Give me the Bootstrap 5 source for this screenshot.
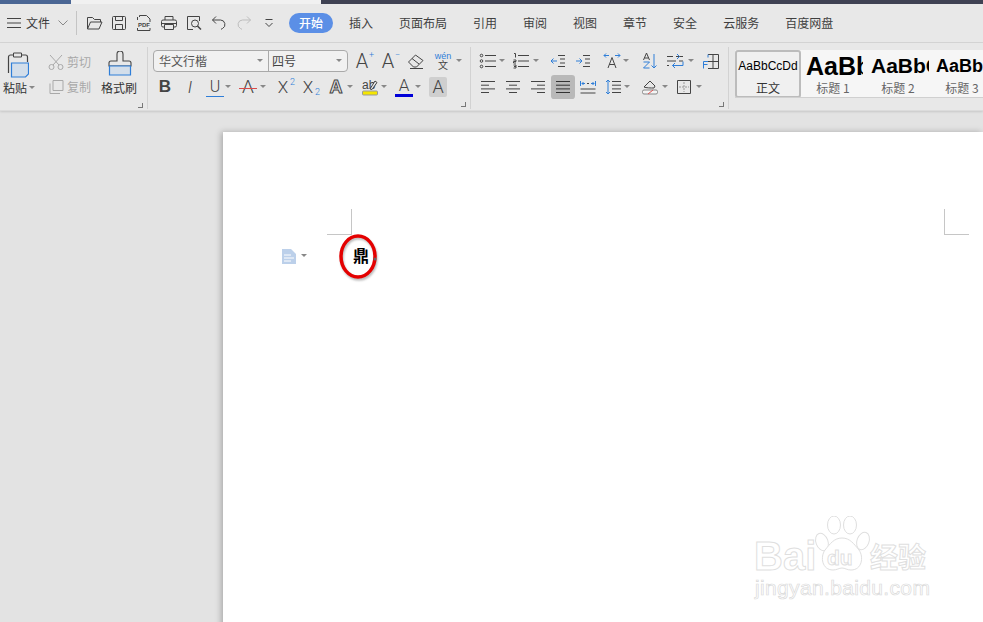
<!DOCTYPE html>
<html lang="zh-CN">
<head>
    <meta charset="UTF-8">
    <meta name="viewport" content="width=device-width, initial-scale=1.0">
    <title>文字文稿</title>
    <link href="https://cdn.jsdelivr.net/npm/bootstrap@5.3.0/dist/css/bootstrap.min.css" rel="stylesheet">
    <style>
        html, body { height: 622px; overflow: hidden; }
        body { font: 12px/1.2 "Noto Sans CJK SC", "Liberation Sans", sans-serif; color: #3a3a3a; background: #e3e3e3; }
        .app-shell { width: 983px; height: 622px; }

        .top-strip { height: 4px; background: #3f4253; flex: none; }
        .top-strip .s-blue { width: 71px; background: #4a6694; }
        .top-strip .s-light { width: 250px; background: #f1f1f1; }

        .tab-row { height: 39px; background: #e8e8e8; border-bottom: 1px solid #d5d5d5; padding-left: 7px; flex: none; }
        .tab-sep { width: 1px; height: 24px; background: #c4c4c4; margin: 0 6px 0 8px; }
        .tab-pill { width: 44px; height: 20px; border-radius: 10px; background: #5b8fe6; color: #fff; font-weight: 500; line-height: 20px; text-align: center; margin-left: 4px; margin-right: 16px; }
        .tab-name { margin-right: 26px; color: #404040; }
        .quick-ic { width: 18px; height: 18px; margin-right: 7px; flex: none; }

        .ribbon { height: 68px; background: #e8e8e8; border-bottom: 1px solid #dcdcdc; box-shadow: 0 1px 2px rgba(0,0,0,.12); flex: none; }
        .rb-group { height: 62px; margin-top: 4px; padding-top: 3px; border-right: 1px solid #d2d2d2; flex: none; }
        .rb-one { width: 148px; }
        .rb-two { width: 323px; padding-left: 5px; }
        .rb-three { width: 258px; }
        .rb-cols { height: 50px; }
        .rb-line { height: 22px; }
        .rb-line + .rb-line { height: 24px; margin-top: 3px; }
        .launch { width: 5px; height: 5px; border-right: 1px solid #777; border-bottom: 1px solid #777; margin: 3px 4px 0 auto; }

        .ic { width: 18px; height: 18px; flex: none; }
        .ic-text { width: 18px; height: 20px; line-height: 20px; flex: none; text-align: center; font-family: "Liberation Sans", sans-serif; font-size: 17px; color: #444; position: relative; }
        .ic-thin { font-family: Roboto, "Liberation Sans", sans-serif; font-weight: 300; }
        .ic-big { font-size: 20px; line-height: 22px; height: 22px; }
        .ic-text sup, .ic-text sub { font-size: 9px; color: #2f7ed8; position: absolute; line-height: 1; }
        .ic-text sup { top: 1px; right: -3px; }
        .ic-text sub { bottom: 0; right: -3px; }
        .under-blue { border-bottom: 1px solid #2f7ed8; height: 19px; line-height: 17px; font-size: 16px; }
        .strike-red { font-size: 19px; }
        .strike-red::after { content: ""; position: absolute; left: 0; right: 0; top: 11px; height: 1px; background: #d94a4a; }
        .under-navy { border-bottom: 3px solid #0000d8; height: 20px; line-height: 16px; font-size: 17px; }
        .outline-a { color: #e8e8e8; -webkit-text-stroke: 1px #444; font-weight: 700; font-size: 18px; }
        .shaded { background: #cfcfcf; border-radius: 2px; font-size: 18px; }
        .active-ic { background: #b9b9b9; box-shadow: 0 0 0 3px #b9b9b9; border-radius: 1px; }
        .caret-sm { width: 8px; height: 4px; flex: none; position: relative; }
        .caret-sm::after { content: ""; position: absolute; left: 1px; top: 0; border: 3px solid transparent; border-top: 3px solid #888; border-bottom: 0; }

        .ml-0 { margin-left: 0; } .ml-1 { margin-left: 1px; } .ml-2 { margin-left: 2px; } .ml-3 { margin-left: 3px; }
        .ml-5 { margin-left: 5px; } .ml-6 { margin-left: 6px; } .ml-7 { margin-left: 7px; } .ml-8 { margin-left: 8px; }
        .ml-9 { margin-left: 9px; } .ml-10 { margin-left: 10px; } .ml-11 { margin-left: 11px; }

        .font-box { width: 195px; height: 22px; background: #f1f1f1; border: 1px solid #a9a9a9; border-radius: 4px; }
        .font-name { width: 115px; padding-left: 5px; border-right: 1px solid #a9a9a9; height: 100%; line-height: 20px; color: #555; }
        .font-size-box { padding-left: 3px; line-height: 20px; flex: 1; color: #444; }

        .paste-col { width: 40px; padding-top: 1px; padding-left: 3px; }
        .cut-col { width: 61px; padding-left: 7px; padding-top: 3px; color: #a9a9a9; }
        .cut-line { height: 18px; margin-bottom: 7px; }
        .brush-col { width: 38px; padding-top: 1px; }
        .big-ic { width: 26px; height: 27px; display: block; }
        .big-label { margin-top: 3px; white-space: nowrap; color: #333; }

        .gallery { width: 248px; height: 48px; margin: 7px 0 0 6px; background: #f6f6f6; border-bottom: 1px solid #d0d0d0; overflow: hidden; flex: none; }
        .style-cell { height: 48px; flex: none; overflow: hidden; text-align: center; color: #666; margin-right: 4px; }
        .style-cell.picked { width: 66px; border: 2px solid #bcbcbc; border-radius: 3px; background: #f0f0f0; color: #333; margin-right: 2px; }
        .style-cell.h-one { width: 60px; }
        .style-cell.h-two { width: 62px; }
        .style-cell.h-three { width: 58px; }
        .sample { display: block; height: 30px; white-space: nowrap; font-family: "Liberation Sans", sans-serif; color: #000; overflow: hidden; text-align: left; font-weight: 700; line-height: 32px; }
        .picked .sample { font-size: 12px; line-height: 28px; height: 28px; font-weight: 400; text-align: center; }
        .h-one .sample { font-size: 25px; padding-left: 3px; }
        .h-two .sample { font-size: 21px; padding-left: 4px; }
        .h-three .sample { font-size: 18px; padding-left: 3px; }
        .style-label { display: block; line-height: 16px; }

        .workspace { padding: 21px 0 0 223px; flex: 1; overflow: hidden; }
        .doc-page { background: #fff; height: 500px; width: 760px; position: relative; box-shadow: -2px 0 6px rgba(0,0,0,.25); }
        .crop { position: absolute; width: 25px; height: 26px; border-bottom: 1px solid #c6c6c6; }
        .crop-left { left: 104px; top: 77px; border-right: 1px solid #c6c6c6; }
        .crop-right { left: 721px; top: 77px; border-left: 1px solid #c6c6c6; }
        .para-mark { position: absolute; left: 59px; top: 117px; }
        .para-caret { position: absolute; left: 77px; top: 122px; }
        .doc-char { position: absolute; left: 130px; top: 111px; font-size: 16px; line-height: 24px; font-weight: 700; color: #000; }
        .red-ring { position: absolute; left: 112px; top: 99px; }
        .wm-wrap { position: absolute; left: 530px; top: 384px; width: 190px; height: 90px; font-family: "Liberation Sans", sans-serif; color: #fff; -webkit-text-stroke: 1px #dfdfdf; }
        .wm-bai { position: absolute; left: 1px; top: 18px; font-size: 40px; line-height: 44px; font-weight: 700; }
        .wm-du { position: absolute; left: 74px; top: 30px; font-size: 21px; line-height: 24px; font-weight: 700; }
        .wm-cn { position: absolute; left: 117px; top: 23px; font: 700 28px/34px "Noto Sans CJK SC", sans-serif; }
        .wm-url { position: absolute; left: 2px; top: 59px; font-size: 21px; line-height: 26px; letter-spacing: .35px; -webkit-text-stroke: .7px #dadada; }
        .wm-paw { position: absolute; left: 60px; top: 0; }
    </style>
</head>
<body>
    <svg width="0" height="0" class="d-none">
        <defs>
            <filter id="soft"><feGaussianBlur stdDeviation="1.2"/></filter>
            <g id="i-folder" fill="none" stroke="#444"><path d="M2.5 15V3.5h5l2 2h6V8"/><path d="M2.5 15l3-7h11.5l-3 7z"/></g>
            <g id="i-save" fill="none" stroke="#444"><path d="M2.500 3.500a1 1 0 0 1 1-1h11a1 1 0 0 1 1 1v11a1 1 0 0 1-1 1h-11a1 1 0 0 1-1-1z"/><path d="M5.500 2.500v4h7v-4M5.500 15.500v-5h7v5"/></g>
            <g id="i-print" fill="none" stroke="#444"><path d="M5 6V2.500h8V6"/><path d="M4.500 13H3a1.500 1.500 0 0 1-1.500-1.500v-4A1.500 1.500 0 0 1 3 6h12a1.500 1.500 0 0 1 1.500 1.500v4A1.500 1.500 0 0 1 15 13h-1.500"/><path d="M4.500 10.500h9v5h-9zM1.500 9.500h15"/></g>
            <g id="i-preview" fill="none" stroke="#444"><path d="M8 15.500H2.500v-13h12V7"/><circle cx="10" cy="9.500" r="3.500"/><path d="M12.500 12l3.500 3.500" stroke-width="1.500"/></g>
            <g id="i-undo" fill="none" stroke="#444"><path d="M6 2.500L2.500 6 6 9.500"/><path d="M2.500 6h8a4.500 4.500 0 0 1 2 8.500l-1.500.8"/></g>
            <g id="i-redo" fill="none" stroke="#bdbdbd"><path d="M12 2.500L15.500 6 12 9.500"/><path d="M15.500 6h-8a4.500 4.500 0 0 0-2 8.500l1.500.8"/></g>
            <g id="i-more" fill="none" stroke="#444"><path d="M5.500 5.500h7M5.500 9l3.500 3.500L12.500 9"/></g>
            <g id="i-eraser" fill="none" stroke="#444"><path d="M1.500 10l7-7 7.500 5.500-6.500 6.500H6.500z"/><path d="M5 6.500l7 5.500M3 16.500h13"/></g>
            <g id="i-bullet" fill="none" stroke="#444"><circle cx="2.500" cy="3.500" r="1.300"/><circle cx="2.500" cy="9" r="1.300"/><circle cx="2.500" cy="14.500" r="1.300"/><path d="M6 3.500h11M6 9h11M6 14.500h11"/></g>
            <g id="i-number" fill="none" stroke="#444"><path d="M2 1.500h1.500v4M1.500 8h2.500v1.500H1.500V11H4M1.500 13H4v1.500H2M4 14.500V16H1.500"/><path d="M6 3.500h11M6 9h11M6 14.500h11"/></g>
            <g id="i-outdent" fill="none"><path d="M9 3.500h7M11 7h5M11 11h5M9 14.500h7" stroke="#444"/><path d="M8 9H2M4.500 6.500L2 9l2.500 2.500" stroke="#2f7ed8"/></g>
            <g id="i-indent" fill="none"><path d="M9 3.500h7M11 7h5M11 11h5M9 14.500h7" stroke="#444"/><path d="M2 9h6M5.500 6.500L8 9l-2.500 2.500" stroke="#2f7ed8"/></g>
            <g id="i-width" fill="none"><path d="M5 16L9 5.500 13 16M6.300 12.500h5.400" stroke="#444"/><path d="M1 3.500h5M3 1.500l-2 2 2 2M17 3.500h-5M15 1.500l2 2-2 2" stroke="#2f7ed8"/></g>
            <g id="i-sort" fill="none"><path d="M2.500 8L5.500 1l3 7M3.500 6h4" stroke="#444"/><path d="M2.500 10h6L2.500 16h6M13 2v14M10.500 13.500L13 16l2.500-2.500" stroke="#2f7ed8"/></g>
            <g id="i-swap" fill="none"><path d="M1 4.500h6M1 9h9M10 4.500h7M13 9h4M1 13.500h2" stroke="#444"/><path d="M11 2l2.500 2.500L11 7" stroke="#2f7ed8"/><path d="M17 9.500v4H6.500M9 11l-2.500 2.500L9 16" stroke="#2f7ed8"/></g>
            <g id="i-table" fill="none"><path d="M6 2.500h10.500v14H6M11 2.500v14M6 9.500h10.500" stroke="#444"/><path d="M6 2.500v3M1.500 9.500h4.500M1.500 9.500v7M1.500 12.500h4" stroke="#2f7ed8"/></g>
            <g id="i-left" fill="none" stroke="#444"><path d="M2 3.500h14M2 7.200h8M2 10.900h14M2 14.500h8"/></g>
            <g id="i-center" fill="none" stroke="#444"><path d="M2 3.500h14M5 7.200h8M2 10.900h14M5 14.500h8"/></g>
            <g id="i-right" fill="none" stroke="#444"><path d="M2 3.500h14M8 7.200h8M2 10.900h14M8 14.500h8"/></g>
            <g id="i-just" fill="none" stroke="#333"><path d="M2 3.500h14M2 7.200h14M2 10.900h14M2 14.500h14"/></g>
            <g id="i-dist" fill="none"><path d="M1.500 11h15M1.500 15h15" stroke="#444"/><path d="M1.500 3v5M16.500 3v5M3 5.500h3M4.500 4l-1.500 1.500L4.500 7M15 5.500h-3M13.500 4l1.500 1.500L13.500 7" stroke="#2f7ed8"/><path d="M8 5.500h2" stroke="#444"/></g>
            <g id="i-spacing" fill="none"><path d="M8 3.500h9M8 7.200h9M8 10.900h9M8 14.500h9" stroke="#444"/><path d="M4 2v14M2 4l2-2 2 2M2 14l2 2 2-2" stroke="#2f7ed8"/></g>
            <g id="i-fill" fill="none" stroke="#444"><path d="M3 9l6-6 5 5-1 2"/><path d="M3 9c2 1 7 1 10 1"/><rect x="1.500" y="12" width="15" height="4" rx="1.500" fill="#f4f4f4" stroke="#888"/><path d="M7 16l5-4" stroke="#e05050"/></g>
            <g id="i-border" fill="none"><path d="M2.500 2.500h13v13h-13z" stroke="#444"/><path d="M9 4v10M4 9h10" stroke="#999" stroke-dasharray="2 1"/></g>
        </defs>
    </svg>

    <div class="app-shell d-flex flex-column">
        <div class="top-strip d-flex">
            <div class="s-blue"></div>
            <div class="s-light"></div>
        </div>

        <div class="tab-row d-flex align-items-center">
            <svg width="14" height="12" viewBox="0 0 14 12" class="flex-none"><path d="M0 1.500h14M0 6h14M0 10.500h14" stroke="#444" fill="none"/></svg>
            <span class="ml-5 text-nowrap">文件</span>
            <svg width="10" height="6" viewBox="0 0 10 6" class="ml-8"><path d="M.5.500L5 5l4.500-4.500" stroke="#888" fill="none"/></svg>
            <span class="tab-sep"></span>
            <svg class="quick-ic ml-2" viewBox="0 0 18 18"><use href="#i-folder"/></svg>
            <svg class="quick-ic" viewBox="0 0 18 18"><use href="#i-save"/></svg>
            <svg class="quick-ic" viewBox="0 0 18 18"><path d="M4.500 3V1.500h7l3.500 3.500v3M2.500 14v2.500h12.500V14M2.500 3v3" fill="none" stroke="#444"/><text x="9" y="12.500" font-size="6" font-weight="700" text-anchor="middle" fill="#444" font-family="Liberation Sans">PDF</text></svg>
            <svg class="quick-ic" viewBox="0 0 18 18"><use href="#i-print"/></svg>
            <svg class="quick-ic" viewBox="0 0 18 18"><use href="#i-preview"/></svg>
            <svg class="quick-ic" viewBox="0 0 18 18"><use href="#i-undo"/></svg>
            <svg class="quick-ic" viewBox="0 0 18 18"><use href="#i-redo"/></svg>
            <svg class="quick-ic" viewBox="0 0 18 18"><use href="#i-more"/></svg>
            <span class="tab-pill">开始</span>
            <span class="tab-name">插入</span>
            <span class="tab-name">页面布局</span>
            <span class="tab-name">引用</span>
            <span class="tab-name">审阅</span>
            <span class="tab-name">视图</span>
            <span class="tab-name">章节</span>
            <span class="tab-name">安全</span>
            <span class="tab-name">云服务</span>
            <span class="tab-name">百度网盘</span>
        </div>

        <div class="ribbon d-flex">
            <div class="rb-group rb-one">
                <div class="rb-cols d-flex">
                    <div class="paste-col">
                        <svg class="big-ic" viewBox="0 0 26 27"><path d="M5.500 22V6a2 2 0 0 1 2-2h15a2 2 0 0 1 2 2v5" fill="none" stroke="#444" stroke-width="1.200"/><path d="M10.500 2h8v4h-8z" fill="#e8e8e8" stroke="#444"/><path d="M8.500 12h17v11l-3 3h-14z" fill="#d3deea" stroke="#2f7ed8" stroke-width="1.200"/></svg>
                        <div class="big-label d-flex align-items-center">粘贴<span class="caret-sm ml-1"></span></div>
                    </div>
                    <div class="cut-col">
                        <div class="cut-line d-flex align-items-center">
                            <svg class="ic" viewBox="0 0 18 18" fill="none" stroke="#a9a9a9"><circle cx="4.500" cy="14" r="2.500"/><circle cx="13.500" cy="14" r="2.500"/><path d="M6 12L15 2M12 12L3 2"/></svg>
                            <span class="ml-2">剪切</span>
                        </div>
                        <div class="cut-line d-flex align-items-center">
                            <svg class="ic" viewBox="0 0 18 18" fill="none" stroke="#a9a9a9"><path d="M6 2.500h10v10H6z"/><path d="M3 5.500v10h10"/></svg>
                            <span class="ml-2">复制</span>
                        </div>
                    </div>
                    <div class="brush-col">
                        <svg class="big-ic mx-auto" viewBox="0 0 26 27"><path d="M10 10V3a3 3 0 0 1 6 0v7h6a2 2 0 0 1 2 2v3H2v-3a2 2 0 0 1 2-2z" fill="none" stroke="#444" stroke-width="1.100"/><path d="M2.500 15h21v9h-21z" fill="#d3deea" stroke="#2f7ed8" stroke-width="1.200"/></svg>
                        <div class="big-label">格式刷</div>
                    </div>
                </div>
                <div class="launch"></div>
            </div>

            <div class="rb-group rb-two">
                <div class="rb-line d-flex align-items-center">
                    <div class="font-box d-flex">
                        <div class="font-name d-flex align-items-center justify-content-between">华文行楷<span class="caret-sm me-1"></span></div>
                        <div class="font-size-box d-flex align-items-center justify-content-between">四号<span class="caret-sm me-1"></span></div>
                    </div>
                    <span class="ic-text ic-thin ic-big ml-5">A<sup>+</sup></span>
                    <span class="ic-text ic-thin ic-big ml-8">A<sup>−</sup></span>
                    <svg class="ic ml-10" viewBox="0 0 18 18"><use href="#i-eraser"/></svg>
                    <svg class="ic ml-9" viewBox="0 0 18 18"><text x="9" y="6.500" font-size="9" text-anchor="middle" fill="#2f7ed8" font-family="Liberation Sans">wén</text><text x="9" y="17" font-size="10" text-anchor="middle" fill="#444" font-family="Noto Sans CJK SC">文</text></svg>
                    <span class="caret-sm ml-3"></span>
                </div>
                <div class="rb-line d-flex align-items-center">
                    <span class="ic-text ml-3"><b>B</b></span>
                    <span class="ic-text ic-thin ml-7"><i>I</i></span>
                    <span class="ic-text ic-thin ml-7 under-blue">U</span>
                    <span class="caret-sm"></span>
                    <span class="ic-text ic-thin ml-7 strike-red">A</span>
                    <span class="caret-sm ml-2"></span>
                    <span class="ic-text ic-thin ml-7">X<sup>2</sup></span>
                    <span class="ic-text ic-thin ml-7">X<sub>2</sub></span>
                    <span class="ic-text outline-a ml-10">A</span>
                    <span class="caret-sm ml-1"></span>
                    <svg class="ic ml-7" viewBox="0 0 18 18"><text x="1" y="11" font-size="12" fill="#444" font-family="Liberation Sans">ab</text><path d="M9 11l5-8 2 1.500-5 7z" fill="#e8e8e8" stroke="#444"/><rect x="1.500" y="13" width="15" height="4" rx="1" fill="#f5e600" stroke="#999"/></svg>
                    <span class="caret-sm ml-1"></span>
                    <span class="ic-text ic-thin ml-7 under-navy">A</span>
                    <span class="caret-sm ml-1"></span>
                    <span class="ic-text ic-thin ml-7 shaded">A</span>
                </div>
                <div class="launch"></div>
            </div>

            <div class="rb-group rb-three">
                <div class="rb-line d-flex align-items-center ps-2">
                    <svg class="ic" viewBox="0 0 18 18"><use href="#i-bullet"/></svg>
                    <span class="caret-sm ml-1"></span>
                    <svg class="ic ml-6" viewBox="0 0 18 18"><use href="#i-number"/></svg>
                    <span class="caret-sm ml-2"></span>
                    <svg class="ic ml-9" viewBox="0 0 18 18"><use href="#i-outdent"/></svg>
                    <svg class="ic ml-7" viewBox="0 0 18 18"><use href="#i-indent"/></svg>
                    <svg class="ic ml-11" viewBox="0 0 18 18"><use href="#i-width"/></svg>
                    <span class="caret-sm ml-1"></span>
                    <svg class="ic ml-11" viewBox="0 0 18 18"><use href="#i-sort"/></svg>
                    <svg class="ic ml-7" viewBox="0 0 18 18"><use href="#i-swap"/></svg>
                    <span class="caret-sm ml-3"></span>
                    <svg class="ic ml-7" viewBox="0 0 18 18"><use href="#i-table"/></svg>
                </div>
                <div class="rb-line d-flex align-items-center ps-2">
                    <svg class="ic" viewBox="0 0 18 18"><use href="#i-left"/></svg>
                    <svg class="ic ml-7" viewBox="0 0 18 18"><use href="#i-center"/></svg>
                    <svg class="ic ml-7" viewBox="0 0 18 18"><use href="#i-right"/></svg>
                    <svg class="ic ml-7 active-ic" viewBox="0 0 18 18"><use href="#i-just"/></svg>
                    <svg class="ic ml-7" viewBox="0 0 18 18"><use href="#i-dist"/></svg>
                    <svg class="ic ml-7" viewBox="0 0 18 18"><use href="#i-spacing"/></svg>
                    <span class="caret-sm ml-1"></span>
                    <svg class="ic ml-10" viewBox="0 0 18 18"><use href="#i-fill"/></svg>
                    <span class="caret-sm ml-2"></span>
                    <svg class="ic ml-6" viewBox="0 0 18 18"><use href="#i-border"/></svg>
                    <span class="caret-sm ml-2"></span>
                </div>
                <div class="launch"></div>
            </div>

            <div class="gallery d-flex">
                <div class="style-cell picked"><span class="sample">AaBbCcDd</span><span class="style-label">正文</span></div>
                <div class="style-cell h-one"><span class="sample">AaBb</span><span class="style-label">标题 1</span></div>
                <div class="style-cell h-two"><span class="sample">AaBbC</span><span class="style-label">标题 2</span></div>
                <div class="style-cell h-three"><span class="sample">AaBb</span><span class="style-label">标题 3</span></div>
            </div>
        </div>

        <div class="workspace">
            <div class="doc-page">
                <div class="crop crop-left"></div>
                <div class="crop crop-right"></div>
                <svg class="para-mark" width="14" height="15" viewBox="0 0 14 15"><path d="M0 0h9l5 5v10H0z" fill="#bcd0ea"/><path d="M2 6h7M2 9h10M2 12h7" stroke="#fff"/></svg>
                <span class="caret-sm para-caret"></span>
                <div class="doc-char">鼎</div>
                <svg class="red-ring" width="48" height="54" viewBox="0 0 48 54"><ellipse cx="24" cy="27.500" rx="17" ry="20.500" fill="none" stroke="#777" stroke-width="3" opacity=".55" filter="url(#soft)"/><ellipse cx="23" cy="25.500" rx="17" ry="20.500" fill="none" stroke="#e40000" stroke-width="3.500"/><circle cx="40" cy="28" r="1.500" fill="#666"/></svg>
                <div class="wm-wrap">
                    <svg class="wm-paw" width="58" height="58" viewBox="0 0 58 58" fill="#fff" stroke="#dfdfdf"><ellipse cx="9" cy="26" rx="6" ry="9" transform="rotate(-20 9 26)"/><ellipse cx="21" cy="9" rx="6.500" ry="9"/><ellipse cx="37" cy="9" rx="6.500" ry="9"/><ellipse cx="50" cy="25" rx="6" ry="9" transform="rotate(20 50 25)"/><path d="M29 22c8 0 12 6 17 12 5 7 3 20-8 20-4 0-6-2-9-2s-5 2-9 2c-11 0-13-13-8-20 5-6 9-12 17-12z"/></svg>
                    <span class="wm-bai">Bai</span>
                    <span class="wm-du">du</span>
                    <span class="wm-cn">经验</span>
                    <span class="wm-url">jingyan.baidu.com</span>
                </div>
            </div>
        </div>
    </div>
</body>
</html>
